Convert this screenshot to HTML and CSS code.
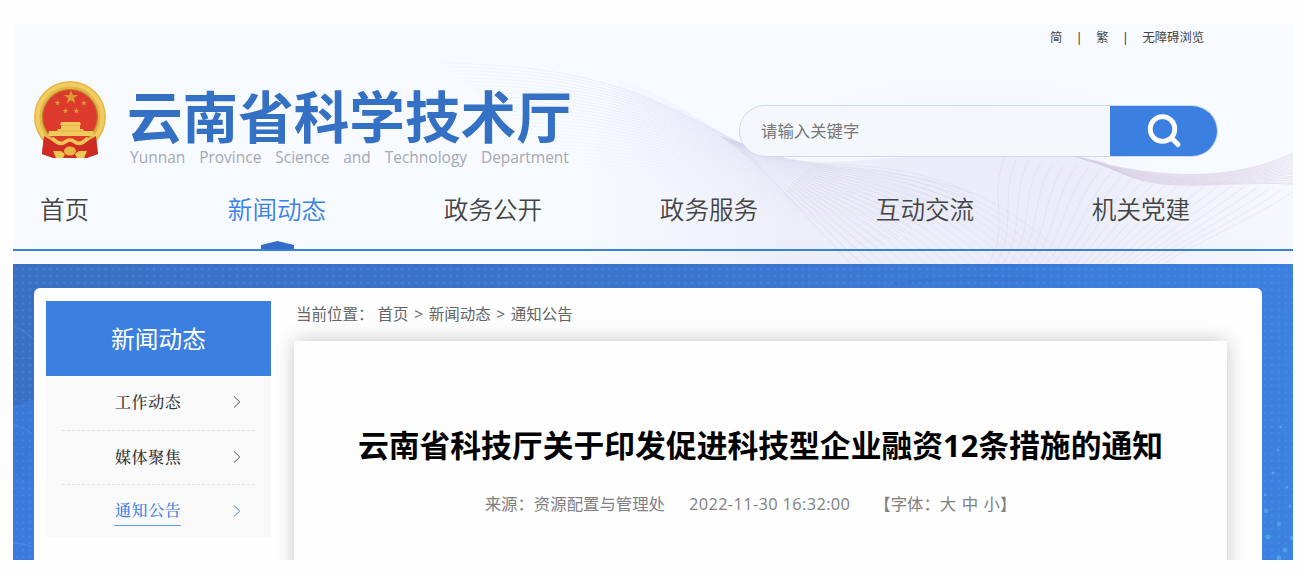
FILE: index.html
```
<!DOCTYPE html>
<html lang="zh-CN">
<head>
    <meta charset="UTF-8">
    <meta name="viewport" content="width=device-width, initial-scale=1.0">
    <title>云南省科学技术厅</title>
    <link rel="stylesheet" href="styles.css">
</head>
<body>

<div class="page">
    <header class="header">
        <svg class="waves" id="waves" viewBox="0 0 1280 240">
            <defs>
                <linearGradient id="fill1" x1="0" y1="0" x2="1" y2="0">
                    <stop offset="0" stop-color="#e8e9f8" stop-opacity="0"/>
                    <stop offset="0.3" stop-color="#e8e9f8" stop-opacity="0.7"/>
                    <stop offset="0.7" stop-color="#e8e9f8" stop-opacity="0.85"/>
                    <stop offset="1" stop-color="#f3f5fc" stop-opacity="0.5"/>
                </linearGradient>
                <linearGradient id="fade" gradientUnits="userSpaceOnUse" x1="420" y1="0" x2="760" y2="0">
                    <stop offset="0" stop-color="#cfd6f6" stop-opacity="0.15"/>
                    <stop offset="0.7" stop-color="#cdd5f5" stop-opacity="0.6"/>
                    <stop offset="1" stop-color="#cbcce9" stop-opacity="0.5"/>
                </linearGradient>
                <radialGradient id="glow">
                    <stop offset="0" stop-color="#eff2fb"/>
                    <stop offset="1" stop-color="#f7fbff" stop-opacity="0"/>
                </radialGradient>
            </defs>
            <ellipse cx="960" cy="120" rx="290" ry="105" fill="url(#glow)"/>
            <path fill="url(#fill1)" d="M560 240 Q570 130 607 55 C650 70 690 98 727 119 Q740 128 770 134 C800 142 860 136 940 128 L1060 132 C1120 148 1200 162 1280 160 V240Z"/>
        </svg>

        <div class="top-links">
            <a>简</a><span>|</span><a>繁</a><span>|</span><a>无障碍浏览</a>
        </div>

        <div class="brand-row">
            <svg class="emblem" viewBox="0 0 72 78">
                <path d="M10 54 L8 73 L21 77 H51 L64 73 L61 54Z" fill="#cb2a22"/>
                <circle cx="36" cy="36" r="36" fill="#e4b548"/>
                <circle cx="36" cy="36" r="32.5" fill="none" stroke="#f1cc60" stroke-width="4"/>
                <circle cx="36" cy="36" r="27.5" fill="#dc3a2d" stroke="#b8822c" stroke-width="1.2"/>
                <g fill="#d99b32">
                    <path id="star" d="M37 9l1.7 4.9 5.3.1-4.2 3.2 1.5 5-4.3-3-4.3 3 1.5-5-4.2-3.2 5.3-.1z"/>
                    <use href="#star" transform="translate(7.5 15) scale(.43)"/>
                    <use href="#star" transform="translate(34 15) scale(.43)"/>
                    <use href="#star" transform="translate(15.5 23) scale(.43)"/>
                    <use href="#star" transform="translate(26.5 23) scale(.43)"/>
                </g>
                <path d="M27 41h19l1 3h-1v4h3l1 2h9l1 5H14l1-5h8l1-2h3v-4h-1z" fill="#efc95a"/>
                <path d="M27 44.5h19M24 50h25" stroke="#d9a23c" stroke-width=".6"/>
                <path d="M10 55L20 61Q24 66 30 63L36 60L42 63Q48 66 52 61L62 55L64 73L53 77H19L8 73Z" fill="#cf2d24"/>
                <path d="M18 57q8 8 13 4q5-4 10 0q5 4 13-4" fill="none" stroke="#efc656" stroke-width="3.6"/>
                <path d="M19 70h8l4 3-2 4h-7zM53 70h-8l-4 3 2 4h7z" fill="#efc555"/>
                <ellipse cx="36" cy="70" rx="6" ry="4.5" fill="#e8b744"/>
            </svg>
            <div class="brand">
                <h1>云南省科学技术厅</h1>
                <p>Yunnan Province Science and Technology Department</p>
            </div>
            <div class="search">
                <input type="text" placeholder="请输入关键字">
                <button aria-label="搜索">
                    <svg width="36" height="36" viewBox="0 0 36 36" fill="none" stroke="#fff">
                        <circle cx="16.5" cy="16" r="12.3" stroke-width="4.8"/>
                        <path d="M26 25.5L32 31.5" stroke-width="5" stroke-linecap="round"/>
                    </svg>
                </button>
            </div>
        </div>

        <nav class="nav">
            <a>首页</a>
            <a class="active">新闻动态</a>
            <a>政务公开</a>
            <a>政务服务</a>
            <a>互动交流</a>
            <a>机关党建</a>
        </nav>
    </header>

    <main class="main">
        <svg class="main-bg" viewBox="0 0 1280 296">
            <path d="M0 143L22 134V218L0 211z" fill="#3a78d9"/>
            <path d="M0 211L22 218V296H0z" fill="#3c7ae2"/>
            <g fill="none" stroke="#5b97e8" stroke-opacity=".5">
                <path d="M0 62Q12 66 22 76M0 160L22 170M0 278L22 283"/>
            </g>
            <path d="M880 20Q950 10 1020 16" fill="none" stroke="#3563c4" stroke-width="3" stroke-opacity=".2"/>
            <rect width="1280" height="296" fill="url(#dots)"/>
            <g fill="#4ea3ea">
                <circle cx="1253" cy="247" r="2"/><circle cx="1266" cy="260" r="2.2"/>
                <circle cx="1255" cy="273" r="2.4"/><circle cx="1272" cy="286" r="2.5"/>
                <circle cx="1279" cy="274" r="2"/><circle cx="1260" cy="209" r="1.6"/>
                <circle cx="1274" cy="223" r="1.6"/><circle cx="1252" cy="231" r="1.4"/>
                <circle cx="1277" cy="242" r="1.5"/><circle cx="1266" cy="294" r="2.4"/>
                <circle cx="1265" cy="186" r="1.2"/><circle cx="1268" cy="163" r="1.3"/>
            </g>
            <defs>
                <pattern id="dots" width="6.9" height="6.85" patternUnits="userSpaceOnUse">
                    <rect x="2" y="4.4" width="2" height="1.6" fill="#5398e8" fill-opacity=".5"/>
                </pattern>
            </defs>
        </svg>

        <div class="panel">
            <aside class="sidebar">
                <h2>新闻动态</h2>
                <ul>
                    <li><a>工作动态</a><svg viewBox="0 0 8 12"><path d="M1 .5L6.8 6L1 11.5"/></svg></li>
                    <li><a>媒体聚焦</a><svg viewBox="0 0 8 12"><path d="M1 .5L6.8 6L1 11.5"/></svg></li>
                    <li class="current"><a>通知公告</a><svg viewBox="0 0 8 12"><path d="M1 .5L6.8 6L1 11.5"/></svg></li>
                </ul>
            </aside>
            <section class="content">
                <div class="crumbs"><span>当前位置：</span>首页 &gt; 新闻动态 &gt; 通知公告</div>
                <article class="article">
                    <h3>云南省科技厅关于印发促进科技型企业融资12条措施的通知</h3>
                    <div class="meta">
                        <span>来源：资源配置与管理处</span>
                        <span>2022-11-30 16:32:00</span>
                        <span class="size">【字体：大 中 小】</span>
                    </div>
                </article>
            </section>
        </div>
    </main>
</div>

<script src="script.js"></script>
</body>
</html>
```
FILE: styles.css
```
* {
    box-sizing: border-box;
    margin: 0;
    padding: 0;
}
body {
    background: #fefefe;
    font-family: "Open Sans", "Noto Sans CJK SC", sans-serif;
    color: #444;
    overflow: hidden;
}
.page {
    width: 1280px;
    height: 536px;
    margin: 24px 0 0 13px;
    overflow: hidden;
}

/* header */
.header {
    position: relative;
    height: 240px;
    background: #f7fbff;
}
.waves {
    position: absolute;
    top: 0;
    left: 0;
    width: 1280px;
    height: 240px;
}
.top-links {
    position: relative;
    display: flex;
    justify-content: flex-end;
    height: 28px;
    padding-right: 89px;
    font-size: 12.3px;
    line-height: 28px;
}
.top-links span {
    width: 34px;
    text-align: center;
    color: #222;
}
.brand-row {
    position: relative;
    display: flex;
    height: 122px;
    padding-left: 21px;
}
.emblem {
    width: 72px;
    height: 78px;
    margin-top: 29px;
}
.brand {
    width: 450px;
    margin: 37px 0 0 21px;
}
.brand h1 {
    font-size: 55.6px;
    line-height: 56px;
    font-weight: 700;
    color: #3471c4;
    white-space: nowrap;
}
.brand p {
    padding-left: 3px;
    font-size: 15.5px;
    line-height: 20px;
    margin-top: 2px;
    word-spacing: 9.8px;
    color: #a5a8b6;
    white-space: nowrap;
}
.search {
    display: flex;
    width: 479px;
    height: 52px;
    margin: 53px 0 0 162px;
    border: 1px solid #cbdaf0;
    border-radius: 26px;
    background: #f4f8fd;
    overflow: hidden;
}
.search input {
    width: 370px;
    padding: 0 0 2px 21px;
    border: 0;
    background: none;
    font-family: inherit;
    font-size: 16.4px;
}
.search input::placeholder {
    color: #777;
}
.search button {
    flex: 1;
    border: 0;
    background: #3b80e0;
}
.search button svg {
    display: block;
    margin: 0 auto;
}
.nav {
    position: relative;
    display: flex;
    height: 77px;
    border-bottom: 2px solid #3b7fdc;
    font-size: 24.6px;
    font-weight: 350;
    line-height: 71px;
    text-align: center;
}
.nav a {
    position: relative;
    width: 216px;
}
.nav a:first-child {
    width: 103px;
    margin-right: 53px;
}
.nav .active {
    color: #3b80e6;
}
.nav .active::after {
    content: "";
    position: absolute;
    left: 92px;
    bottom: 0;
    width: 33px;
    height: 8px;
    background: #326cc9;
    clip-path: polygon(0 50%, 50% 0, 100% 50%, 100% 100%, 0 100%);
}

/* main */
.main {
    position: relative;
    height: 296px;
    padding: 24px 31px 0 21px;
    background: linear-gradient(100deg, #3a6fc4 0, #3c74ca 40%, #3b7bd8 75%, #3c82e0 100%);
}
.main-bg {
    position: absolute;
    top: 0;
    left: 0;
    width: 1280px;
    height: 296px;
}
.panel {
    position: relative;
    display: flex;
    height: 280px;
    padding: 13px 35px 0 12px;
    border-radius: 6px;
    background: #fefefe;
}
.sidebar {
    width: 225px;
}
.sidebar h2 {
    height: 75px;
    line-height: 76px;
    background: #3b80e0;
    color: #fff;
    font-size: 23.7px;
    font-weight: 400;
    text-align: center;
}
.sidebar ul {
    height: 162px;
    padding: 0 16px;
    background: #f9f9f9;
    list-style: none;
}
.sidebar li {
    display: flex;
    align-items: center;
    height: 54.5px;
    padding: 0 14px 1px 52px;
    border-bottom: 1px dashed #e4e4e4;
    font-family: "Noto Serif CJK SC", "Noto Sans CJK SC", serif;
    font-size: 16px;
    font-weight: 500;
    letter-spacing: 0.6px;
}
.sidebar li:last-child {
    border-bottom: 0;
    padding-bottom: 3px;
}
.sidebar li a {
    padding: 0 0 0 1px;
    line-height: 30px;
    color: #333;
}
.sidebar li svg {
    width: 8px;
    height: 12px;
    margin-left: auto;
    fill: none;
    stroke: #555;
}
.sidebar .current a {
    color: #3f7ee0;
    border-bottom: 1px solid #5d9bee;
}
.sidebar .current svg {
    stroke: #4a88e6;
}
.content {
    flex: 1;
    margin-left: 23px;
}
.crumbs {
    height: 40px;
    padding-left: 2px;
    font-size: 15.5px;
    line-height: 27px;
    word-spacing: 1.6px;
    color: #666;
}
.crumbs span {
    margin-right: 4px;
}
.article {
    height: 260px;
    padding-top: 81px;
    background: #fefefe;
    box-shadow: 0 0 18px rgba(0, 0, 0, 0.22);
    text-align: center;
}
.article h3 {
    font-size: 30.8px;
    line-height: 46px;
    font-weight: 700;
    color: #000;
    white-space: nowrap;
}
.meta {
    display: flex;
    justify-content: center;
    gap: 24px;
    margin-top: 23px;
    padding-right: 20px;
    font-size: 16.4px;
    line-height: 26px;
    color: #808080;
}
.meta span:nth-child(2) {
    letter-spacing: 0.35px;
}
.meta .size {
    word-spacing: 1.2px;
}
```
FILE: script.js
```
const waves = document.getElementById('waves');

// draws a family of curves between two outer ones, fadeOut weakens the last ones
function drawLines(from, to, count, stroke, opacity, fadeOut = 0) {
    for (let i = 0; i <= count; i++) {
        const t = i / count;
        const p = from.map((v, k) => (v + (to[k] - v) * t).toFixed(1));
        const path = document.createElementNS('http://www.w3.org/2000/svg', 'path');
        path.setAttribute('d', `M${p[0]} ${p[1]}C${p.slice(2).join(' ')}`);
        path.setAttribute('fill', 'none');
        path.setAttribute('stroke', stroke);
        path.setAttribute('stroke-opacity', (opacity * (1 - t * fadeOut)).toFixed(2));
        waves.appendChild(path);
    }
}

// left wave
drawLines([430, 39, 590, 42, 640, 75, 727, 119], [580, 165, 660, 165, 740, 185, 815, 215], 34, 'url(#fade)', 0.8, 1);
// middle
drawLines([727, 119, 790, 150, 880, 138, 960, 170], [707, 112, 750, 140, 795, 195, 838, 240], 18, '#cfcfe8', 0.4);
drawLines([800, 140, 900, 140, 980, 160, 1060, 240], [770, 170, 810, 200, 825, 220, 850, 240], 20, '#d2cfe6', 0.3);
// right fan
drawLines([992, 133, 975, 170, 998, 205, 975, 240], [1280, 168, 1230, 200, 1180, 220, 1150, 240], 24, '#d9cbe2', 0.35);
// right ribbon
drawLines([1060, 132, 1130, 152, 1210, 162, 1280, 129], [1090, 138, 1140, 175, 1200, 156, 1280, 160], 16, '#d8cbe2', 0.5);
```
